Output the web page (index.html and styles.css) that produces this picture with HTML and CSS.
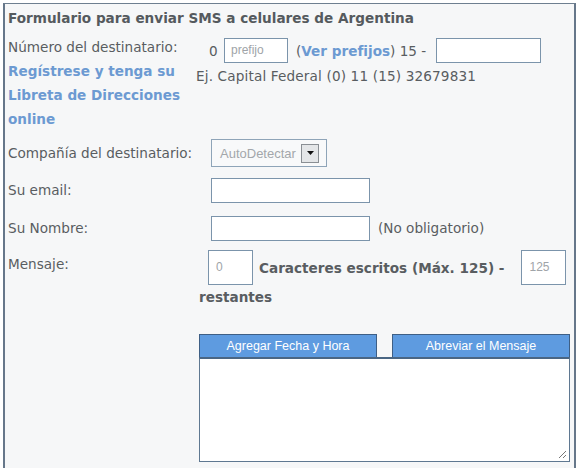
FILE: index.html
```html
<!DOCTYPE html>
<html lang="es">
<head>
<meta charset="utf-8">
<title>Formulario SMS</title>
<link rel="stylesheet" href="styles.css">
</head>
<body>
<div class="box">
  <div class="title">Formulario para enviar SMS a celulares de Argentina</div>
  <div class="row row-num">
    <div class="label">
      <div>Número del destinatario:</div>
      <a class="reg" href="#">Regístrese y tenga su Libreta de Direcciones online</a>
    </div>
    <div class="value">
      <div class="phone">
        <span class="zero">0</span>
        <span class="field prefix">prefijo</span>
        <span class="paren">(<a class="ver" href="#">Ver prefijos</a>) 15 -</span>
        <span class="field num"></span>
      </div>
      <div class="example">Ej. Capital Federal (0) 11 (15) 32679831</div>
    </div>
  </div>
  <div class="row row-comp">
    <div class="label">Compañía del destinatario:</div>
    <div class="value inline">
      <div class="select"><span class="seltext">AutoDetectar</span><span class="arrow"><svg width="9" height="5" viewBox="0 0 9 5"><path d="M1 0h7L4.5 4z" fill="#111"/></svg></span></div>
    </div>
  </div>
  <div class="row row-email">
    <div class="label">Su email:</div>
    <div class="value inline"><span class="field wide"></span></div>
  </div>
  <div class="row row-name">
    <div class="label">Su Nombre:</div>
    <div class="value inline"><span class="field wide"></span><span class="note">(No obligatorio)</span></div>
  </div>
  <div class="row row-msg">
    <div class="label">Mensaje:</div>
    <div class="value msgline">
      <span class="field count">0</span>
      <b class="chars">Caracteres escritos (Máx. 125) -</b>
      <span class="field count rest">125</span>
    </div>
  </div>
  <div class="restantes">restantes</div>
  <div class="editor">
    <div class="buttons">
      <span class="btn">Agregar Fecha y Hora</span>
      <span class="btn">Abreviar el Mensaje</span>
    </div>
    <div class="textarea"><svg class="grip" width="10" height="10" viewBox="0 0 10 10"><path d="M9 2L2 9M9 6L6 9" stroke="#777" stroke-width="1"/></svg></div>
  </div>
</div>
</body>
</html>
```

FILE: styles.css
```css
html, body {
  margin: 0;
  padding: 0;
  background: #ffffff;
}
body {
  font-family: "DejaVu Sans", Verdana, sans-serif;
  font-size: 13.6px;
  color: #595d61;
}
.box {
  margin: 3px 4px 0 3px;
  height: 465px;
  box-sizing: border-box;
  border-top: 1px solid #6e7f90;
  border-left: 2px solid #66778a;
  border-right: 2px solid #66778a;
  background: #f6f7f8;
  padding: 0 0 0 3px;
}
.title {
  font-weight: bold;
  color: #555a5e;
  padding-top: 2px;
  line-height: 24px;
  margin-bottom: 5px;
}
.row {
  display: grid;
  grid-template-columns: 191px 1fr;
}
.label {
  line-height: 24px;
  white-space: nowrap;
}
.reg {
  display: block;
  color: #6c9ad2;
  font-weight: bold;
  text-decoration: none;
  width: 182px;
  white-space: normal;
  line-height: 24px;
}
.phone {
  display: flex;
  align-items: center;
  height: 25px;
  margin-top: 3px;
}
.zero { margin-left: 10px; width: 15px; }
.field {
  display: inline-block;
  box-sizing: border-box;
  background: #fff;
  border: 1px solid #7b94ab;
  height: 25px;
  font-family: "Liberation Sans", Arial, sans-serif;
  font-size: 12px;
  color: #a0a4a8;
  line-height: 23px;
  padding-left: 6px;
}
.prefix { width: 64px; }
.paren { margin-left: 8px; margin-right: 4px; width: 136px; white-space: nowrap; }
.ver { color: #6c9ad2; font-weight: bold; text-decoration: none; }
.num { width: 105px; }
.example { margin-left: -3px; margin-top: 1px; line-height: 24px; letter-spacing: 0.15px; }
.inline { display: flex; align-items: center; }
.row-comp { margin-top: 8px; }
.row-comp .label { line-height: 28px; }
.select {
  display: inline-flex;
  align-items: center;
  box-sizing: border-box;
  margin-left: 12px;
  width: 116px;
  height: 28px;
  border: 1px solid #8ea4b8;
  background: #f8f9fa;
  font-family: "Liberation Sans", Arial, sans-serif;
  font-size: 13px;
  color: #a3a7ab;
  padding-left: 8px;
}
.seltext { width: 81px; white-space: nowrap; }
.arrow {
  display: inline-flex;
  align-items: center;
  justify-content: center;
  box-sizing: border-box;
  width: 18px;
  height: 19px;
  border: 1px solid #8a8f94;
  background: #e4e6e8;
}
.row-email { margin-top: 11px; }
.row-email .label, .row-name .label { line-height: 25px; }
.wide { width: 159px; margin-left: 12px; }
.row-name { margin-top: 13px; }
.note { margin-left: 8px; line-height: 25px; }
.row-msg { margin-top: 9px; }
.row-msg .label { line-height: 24px; padding-top: 2px; }
.msgline { display: flex; align-items: center; }
.count { width: 45px; height: 35px; line-height: 33px; margin-left: 9px; padding-left: 7px; }
.chars { margin-left: 6px; white-space: nowrap; }
.rest { margin-left: 17px; }
.restantes {
  font-weight: bold;
  margin-left: 191px;
  margin-top: 3px;
  line-height: 18px;
}
.editor {
  margin-left: 191px;
  margin-top: 28px;
  width: 371px;
}
.buttons {
  display: flex;
  justify-content: space-between;
}
.btn {
  box-sizing: border-box;
  width: 178px;
  height: 23px;
  background: #5e9be0;
  border: 1px solid #3e5f85;
  border-bottom: none;
  color: #fff;
  font-family: "Liberation Sans", Arial, sans-serif;
  font-size: 12.5px;
  text-align: center;
  line-height: 22px;
}
.textarea {
  position: relative;
  box-sizing: border-box;
  height: 105px;
  background: #fff;
  border: 1px solid #5f7891;
  border-top: 2px solid #4a6684;
}
.grip { position: absolute; right: 2px; bottom: 2px; }
```
